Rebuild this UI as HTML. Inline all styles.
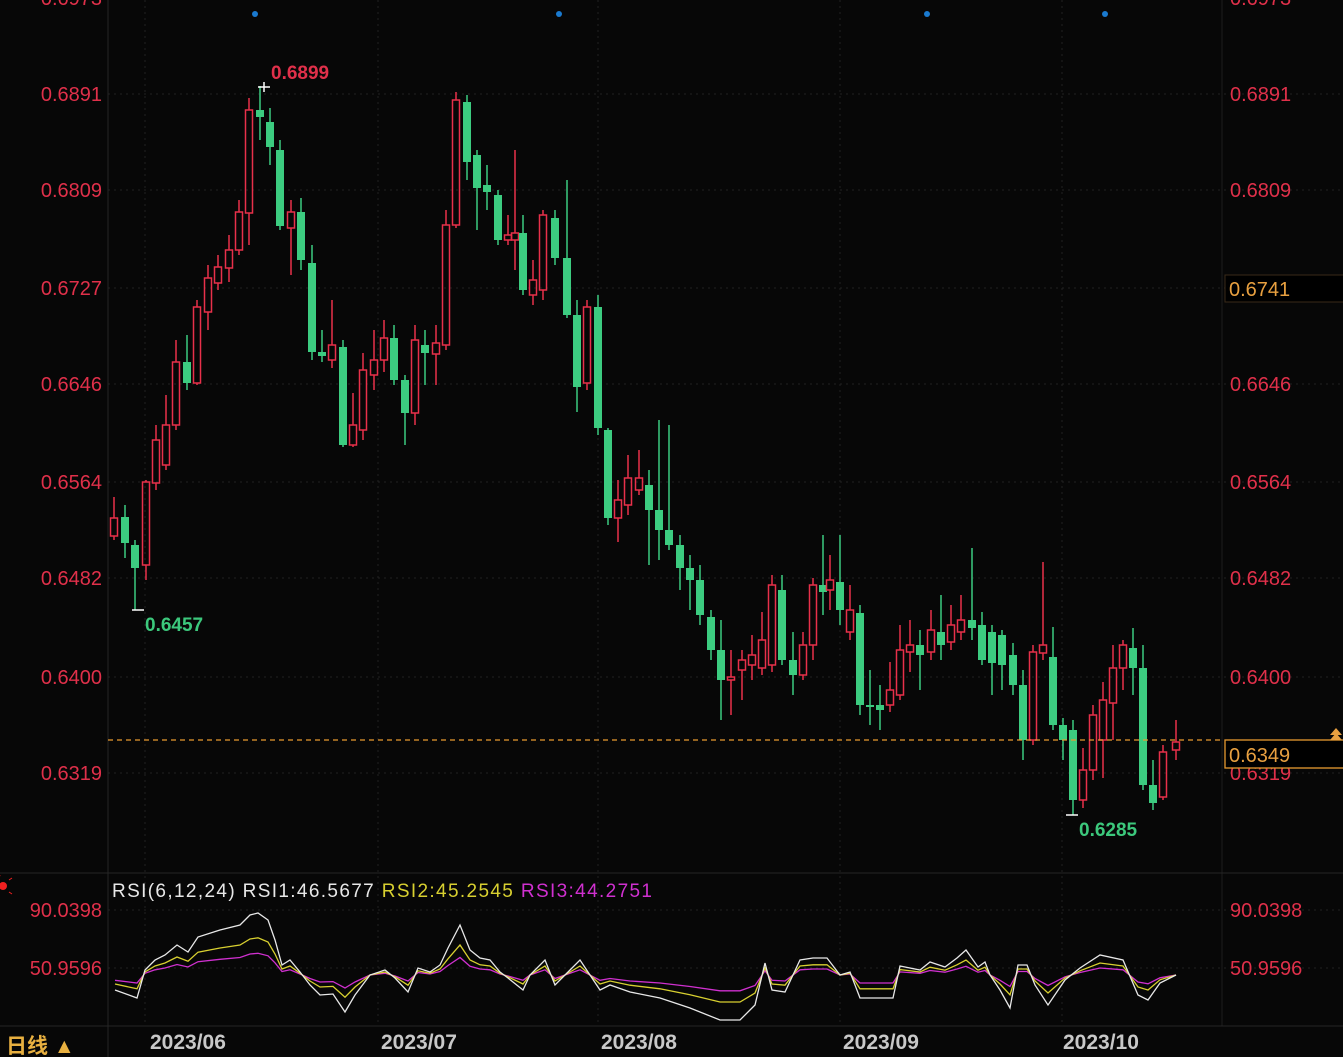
<!DOCTYPE html>
<html><head><meta charset="utf-8"><style>
html,body{margin:0;padding:0;background:#050505;width:1343px;height:1057px;overflow:hidden}
svg{display:block}
text{font-family:"Liberation Sans","Noto Sans CJK SC",sans-serif}
</style></head><body>
<svg id="s" width="1343" height="1057" xmlns="http://www.w3.org/2000/svg">
<rect width="1343" height="1057" fill="#070707"/>
<g id="grid" stroke="#222" stroke-width="1" stroke-dasharray="2,4"></g>
<line x1="108" y1="0" x2="108" y2="1057" stroke="#262626"/>
<line x1="1222" y1="0" x2="1222" y2="1026" stroke="#1c1c1c"/>
<line x1="0" y1="873" x2="1343" y2="873" stroke="#262626"/>
<line x1="0" y1="1026" x2="1343" y2="1026" stroke="#262626"/>
<g id="c"></g>
<g id="rsi" fill="none" stroke-width="1.3"></g>
<g font-size="20" fill="#e0304a">
<text x="102" y="5" text-anchor="end">0.6973</text>
<text x="1230" y="5">0.6973</text>
</g>
<g id="lab" font-size="20" fill="#e0304a"></g>
<line x1="108" y1="740" x2="1222" y2="740" stroke="#e89a30" stroke-width="1.3" stroke-dasharray="5,4"/>
<rect x="1225" y="275" width="120" height="27" fill="#000" stroke="#3a2a18"/>
<text x="1229" y="296" font-size="20" fill="#e8a040">0.6741</text>
<rect x="1225" y="740" width="120" height="28" fill="#000" stroke="#e89a30" stroke-width="1.3"/>
<text x="1229" y="762" font-size="20" fill="#e8a040">0.6349</text>
<path d="M1330 735 l6 -7 l6 7z M1330 740 l6 -7 l6 7z" fill="#e8a040"/>
<g fill="#1a7ad0"><circle cx="255" cy="14" r="3"/><circle cx="559" cy="14" r="3"/><circle cx="927" cy="14" r="3"/><circle cx="1105" cy="14" r="3"/></g>
<text x="271" y="79" font-size="19" font-weight="bold" fill="#e0304a">0.6899</text>
<text x="145" y="631" font-size="19" font-weight="bold" fill="#3cc87c">0.6457</text>
<text x="1079" y="836" font-size="19" font-weight="bold" fill="#3cc87c">0.6285</text>
<path d="M258 87h12M264 82v10M132 610h12M1066 815h12" stroke="#fff" stroke-width="1.5"/>
<text x="112" y="897" font-size="19" textLength="540"><tspan fill="#e8e8e8">RSI(6,12,24) RSI1:46.5677 </tspan><tspan fill="#d8d030"> RSI2:45.2545 </tspan><tspan fill="#d030d0"> RSI3:44.2751</tspan></text>
<text x="102" y="917" font-size="20" text-anchor="end" fill="#e0304a">90.0398</text>
<text x="102" y="975" font-size="20" text-anchor="end" fill="#e0304a">50.9596</text>
<text x="1230" y="917" font-size="20" fill="#e0304a">90.0398</text>
<text x="1230" y="975" font-size="20" fill="#e0304a">50.9596</text>
<circle cx="3" cy="886" r="4" fill="#f02020"/><path d="M9 880l3-2M9 892l3 2M-1 878l1-3" stroke="#f02020"/>
<g font-size="21" font-weight="bold" fill="#c8c8c8">
<text x="150" y="1049">2023/06</text><text x="381" y="1049">2023/07</text><text x="601" y="1049">2023/08</text><text x="843" y="1049">2023/09</text><text x="1063" y="1049">2023/10</text>
</g>
<text x="6" y="1053" font-size="21" font-weight="bold" fill="#e8b040">日线 ▲</text>
</svg>
<script>
var NS="http://www.w3.org/2000/svg";
function el(p,t,a){var e=document.createElementNS(NS,t);for(var k in a)e.setAttribute(k,a[k]);p.appendChild(e);return e;}
var g=document.getElementById('grid');
[94,190,288,384,482,578,677,773,910,968].forEach(function(y){el(g,'line',{x1:108,y1:y,x2:1343,y2:y});});
[145,378,598,840,1062].forEach(function(x){el(g,'line',{x1:x,y1:0,x2:x,y2:1026});});
var lab=document.getElementById('lab');
[[94,'0.6891'],[190,'0.6809'],[288,'0.6727'],[384,'0.6646'],[482,'0.6564'],[578,'0.6482'],[677,'0.6400'],[773,'0.6319']].forEach(function(a){
 var t=el(lab,'text',{x:102,y:a[0]+7,'text-anchor':'end'});t.textContent=a[1];
 var t2=el(lab,'text',{x:1230,y:a[0]+7});t2.textContent=a[1];});
var d=[
[114,518,536,497,540,1],[125,517,543,505,558,0],[135,545,568,540,610,0],[146,482,565,480,580,1],[156,440,483,425,490,1],
[166,425,465,395,470,1],[176,362,425,340,430,1],[187,362,383,335,390,0],[197,307,383,300,385,1],[208,278,312,265,330,1],
[218,267,283,255,290,1],[229,250,268,235,282,1],[239,212,250,200,255,1],[249,110,213,98,245,1],[260,110,117,86,140,0],
[270,122,147,108,165,0],[280,150,226,140,230,0],[291,212,228,200,275,1],[301,212,260,198,270,0],[312,263,352,245,360,0],
[322,352,356,330,362,0],[332,345,360,300,368,1],[343,347,445,340,447,0],[353,425,445,393,447,1],[363,370,430,353,440,1],
[374,360,375,330,390,1],[384,338,360,320,372,1],[394,338,380,325,385,0],[405,380,413,375,445,0],[415,340,413,325,425,1],
[425,345,353,330,385,0],[436,343,354,325,385,1],[446,225,345,210,350,1],[456,100,225,92,228,1],[467,102,162,95,180,0],
[477,155,188,150,230,0],[487,185,192,165,210,0],[498,195,240,190,245,0],[508,235,240,215,245,1],[515,233,240,150,270,1],
[523,233,290,215,295,0],[533,280,295,260,305,1],[543,215,290,210,300,1],[555,218,258,210,265,0],[567,258,315,180,318,0],
[577,315,387,300,412,0],[587,307,383,300,390,1],[598,307,428,295,435,0],[608,430,518,428,525,0],[618,500,518,480,542,1],
[628,478,505,455,515,1],[639,478,490,450,495,1],[649,485,510,470,565,0],[659,510,530,420,560,0],[669,530,545,425,550,0],
[680,545,568,535,590,0],[690,568,580,555,610,0],[700,580,615,565,625,0],[711,617,650,610,660,0],[721,650,680,620,720,0],
[731,677,680,650,715,1],[742,660,670,650,700,1],[752,655,665,635,680,1],[762,640,668,612,675,1],[772,585,665,575,672,1],
[782,590,660,575,665,0],[793,660,675,632,695,0],[803,645,675,632,680,1],[813,585,645,578,660,1],[823,585,592,535,615,0],
[830,580,590,555,610,1],[840,582,610,535,625,0],[850,610,632,585,640,1],[860,613,705,605,715,0],[870,705,707,670,725,0],
[880,705,710,685,730,0],[890,690,705,662,712,1],[900,650,695,625,700,1],[910,645,652,620,672,1],[920,645,655,630,690,0],
[931,630,652,610,660,1],[941,632,645,595,660,0],[951,625,642,605,650,1],[961,620,632,595,640,1],[972,620,628,548,640,0],
[982,625,660,612,665,0],[992,632,663,625,695,0],[1002,635,665,630,690,0],[1013,655,685,643,695,0],[1023,685,740,670,760,0],
[1033,652,740,645,745,1],[1043,645,653,562,660,1],[1053,657,725,627,730,0],[1063,725,740,718,760,0],[1073,730,800,720,815,0],
[1083,770,800,748,808,1],[1093,715,770,705,780,1],[1103,700,740,682,778,1],[1113,668,703,645,740,1],[1123,645,668,640,690,1],
[1133,648,668,628,695,0],[1143,668,785,645,790,0],[1153,785,803,760,810,0],[1163,752,797,745,800,1],[1176,742,750,720,760,1]];
var c=document.getElementById('c');
d.forEach(function(k){var col=k[5]?'#e8304a':'#3ccc80';
 if(k[5]){el(c,'line',{x1:k[0],y1:k[3],x2:k[0],y2:k[1],stroke:col,'stroke-width':1.5});
  el(c,'line',{x1:k[0],y1:k[2],x2:k[0],y2:k[4],stroke:col,'stroke-width':1.5});
  var h=Math.max(k[2]-k[1],1);el(c,'rect',{x:k[0]-3.5,y:k[1],width:7,height:h,fill:'none',stroke:col,'stroke-width':1.5});}
 else{el(c,'line',{x1:k[0],y1:k[3],x2:k[0],y2:k[4],stroke:col,'stroke-width':1.5});
  el(c,'rect',{x:k[0]-4,y:k[1],width:8,height:Math.max(k[2]-k[1],2),fill:col});}});
var w=[[115,990],[137,998],[145,970],[155,960],[165,955],[177,945],[188,952],[198,937],[220,930],[240,925],[250,915],[258,913],[268,920],[275,940],[282,965],[290,960],[300,972],[310,985],[320,995],[333,994],[345,1012],[355,995],[370,975],[385,970],[395,978],[408,992],[418,968],[430,972],[440,965],[448,948],[460,925],[470,950],[480,958],[490,960],[500,972],[508,978],[523,990],[530,975],[545,960],[555,985],[565,975],[580,960],[600,990],[610,985],[630,992],[660,998],[690,1008],[720,1020],[740,1020],[755,1005],[765,963],[772,990],[785,992],[800,960],[813,958],[827,958],[840,975],[850,972],[860,998],[893,998],[900,966],[920,970],[930,962],[945,967],[957,958],[966,950],[978,967],[985,962],[990,975],[1000,990],[1010,1008],[1018,965],[1027,965],[1035,985],[1048,1005],[1065,980],[1080,968],[1100,955],[1123,960],[1138,995],[1148,1000],[1160,983],[1176,975]];
function pts(f){return w.map(function(p){return p[0]+','+(975+(p[1]-975)*f).toFixed(1);}).join(' ');}
var r=document.getElementById('rsi');
el(r,'polyline',{points:pts(0.35),stroke:'#d030d0'});
el(r,'polyline',{points:pts(0.6),stroke:'#d8d030'});
el(r,'polyline',{points:pts(1),stroke:'#e8e8e8'});
</script>
</body></html>
